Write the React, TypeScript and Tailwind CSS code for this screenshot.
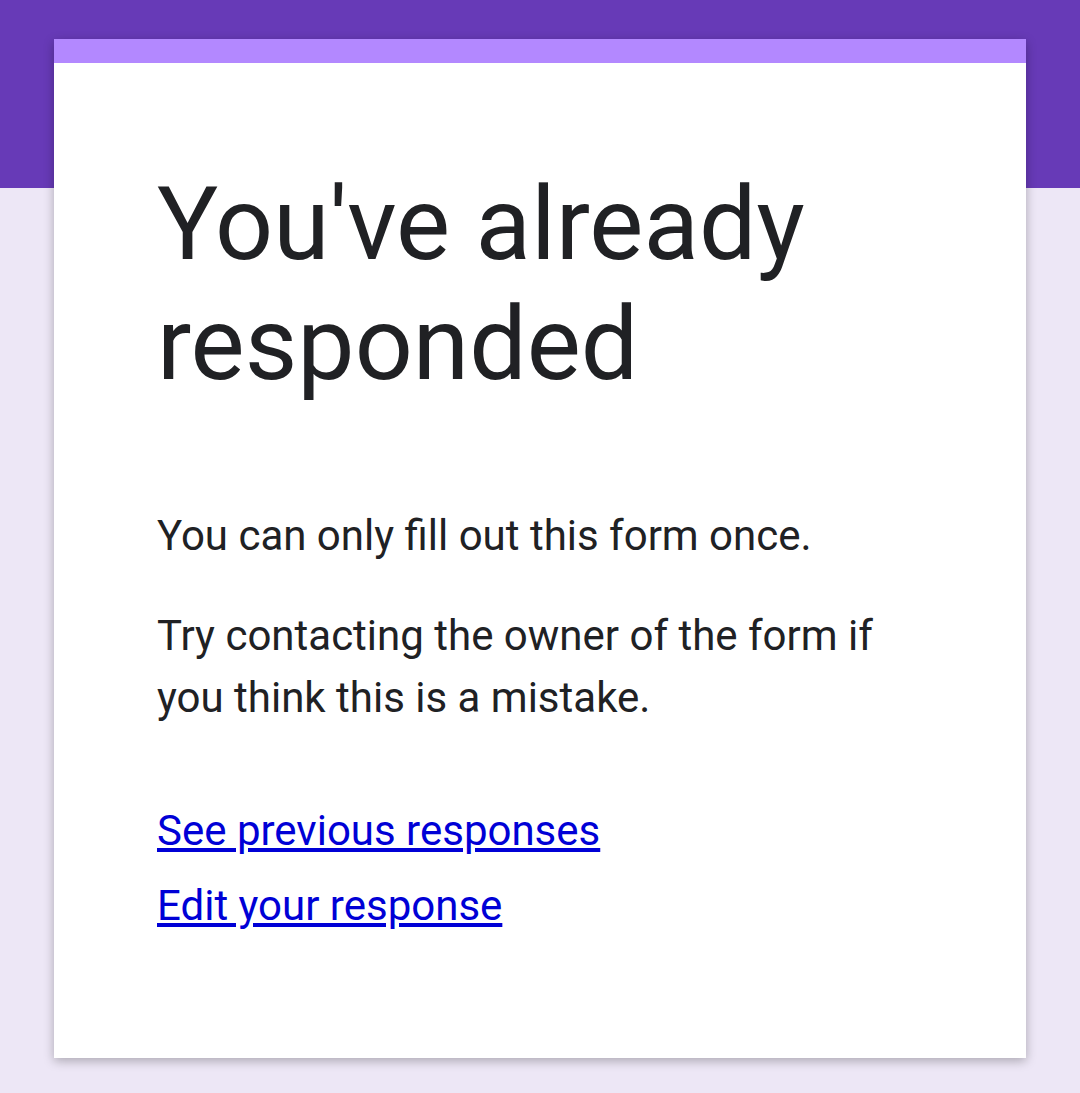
export default function App() {
  return (
    <div className="relative min-h-[1093px] bg-[#ede7f6]" style={{ fontFamily: "Roboto, Arial, sans-serif" }}>
      <div className="absolute inset-x-0 top-0 h-[188px] bg-[#673ab7]" />
      <div className="relative pt-[39px] px-[54px]">
        <div className="bg-white shadow-[0_3px_10px_rgba(0,0,0,0.28)] h-[1019px]">
          <div className="h-[24px] bg-[#b388ff]" />
          <div className="pl-[103px] pr-[103px] pt-[101px] text-[#202124]">
            <h1 className="text-[102px] leading-[120px] font-normal">You've already responded</h1>
            <p className="mt-[101px] text-[42px] leading-[62px]">You can only fill out this form once.</p>
            <p className="mt-[38px] text-[42px] leading-[62px]">Try contacting the owner of the form if you think this is a mistake.</p>
            <div className="mt-[71px] flex flex-col gap-[13px] items-start">
              <a href="#" className="text-[42px] leading-[62px] text-[#0000d6] underline">See previous responses</a>
              <a href="#" className="text-[42px] leading-[62px] text-[#0000d6] underline">Edit your response</a>
            </div>
          </div>
        </div>
      </div>
    </div>
  );
}
